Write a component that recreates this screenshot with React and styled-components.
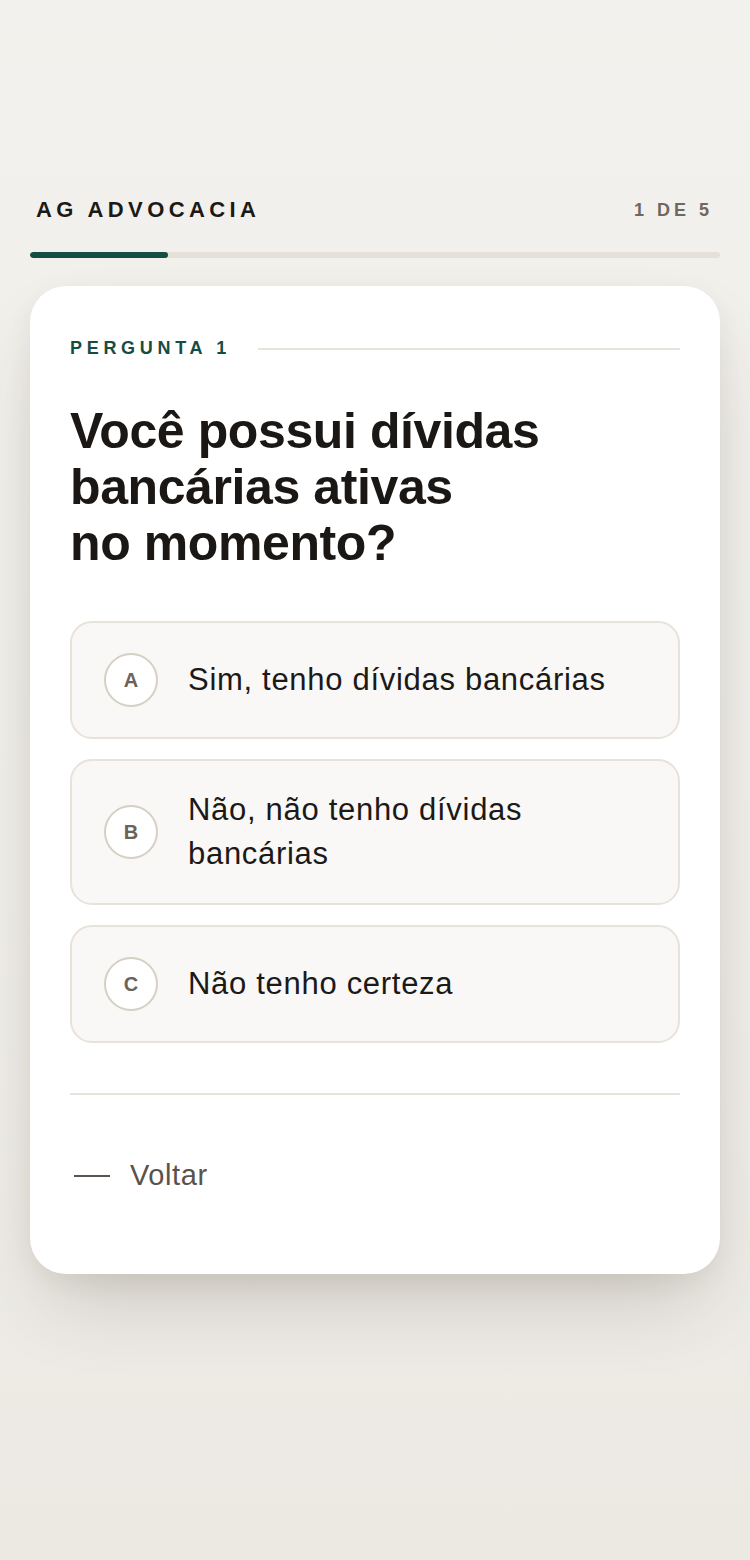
import React from "react";
import styled, { createGlobalStyle } from "styled-components";

const GlobalStyle = createGlobalStyle`
  html, body {
    margin: 0;
    padding: 0;
  }
  body {
    background: #f2f0ec;
    font-family: "Liberation Sans", Arial, sans-serif;
    -webkit-font-smoothing: antialiased;
  }
`;

const options = [
  { letter: "A", text: "Sim, tenho dívidas bancárias" },
  { letter: "B", text: "Não, não tenho dívidas bancárias" },
  { letter: "C", text: "Não tenho certeza" },
];

const App = () => {
  const step = 1;
  const total = 5;

  return (
    <>
      <GlobalStyle />
      <Page>
        <TopBar>
          <Brand>AG ADVOCACIA</Brand>
          <StepCount>
            {step} DE {total}
          </StepCount>
        </TopBar>
        <Track>
          <Fill style={{ width: `${(step / total) * 100}%` }} />
        </Track>

        <Card>
          <LabelRow>
            <Label>PERGUNTA {step}</Label>
            <LabelLine />
          </LabelRow>

          <Question>
            Você possui dívidas
            <br />
            bancárias ativas
            <br />
            no momento?
          </Question>

          <OptionList>
            {options.map((item) => (
              <Option key={item.letter}>
                <Letter>{item.letter}</Letter>
                <OptionText>{item.text}</OptionText>
              </Option>
            ))}
          </OptionList>

          <Divider />

          <BackButton>
            <BackDash />
            Voltar
          </BackButton>
        </Card>
      </Page>
    </>
  );
};

const Page = styled.div`
  min-height: 1560px;
  box-sizing: border-box;
  padding: 194px 30px 0;
  background: linear-gradient(180deg, #f2f1ed 0%, #f0eee9 60%, #ece9e3 100%);
`;

const TopBar = styled.div`
  display: flex;
  justify-content: space-between;
  align-items: center;
  padding: 0 7px 0 6px;
  height: 32px;
`;

const Brand = styled.div`
  font-size: 22px;
  font-weight: 700;
  letter-spacing: 4.4px;
  color: #1c1916;
`;

const StepCount = styled.div`
  font-size: 18px;
  font-weight: 700;
  letter-spacing: 4px;
  color: #6f6760;
`;

const Track = styled.div`
  margin-top: 26px;
  height: 6px;
  border-radius: 3px;
  background: #e5e1d9;
  overflow: hidden;
`;

const Fill = styled.div`
  height: 100%;
  border-radius: 3px;
  background: #164d43;
`;

const Card = styled.div`
  margin-top: 28px;
  background: #ffffff;
  border-radius: 36px;
  padding: 52px 40px 82px;
  box-shadow: 0 40px 80px -20px rgba(60, 52, 40, 0.22),
    0 8px 24px rgba(60, 52, 40, 0.06);
`;

const LabelRow = styled.div`
  display: flex;
  align-items: center;
  gap: 27px;
`;

const Label = styled.div`
  font-size: 18px;
  font-weight: 700;
  letter-spacing: 4.7px;
  color: #164d43;
  white-space: nowrap;
`;

const LabelLine = styled.div`
  flex: 1;
  height: 2px;
  background: #e8e4dc;
`;

const Question = styled.h1`
  margin: 44px 0 0;
  font-size: 50px;
  line-height: 56px;
  font-weight: 700;
  letter-spacing: -0.4px;
  color: #1a1714;
`;

const OptionList = styled.div`
  margin-top: 50px;
  display: flex;
  flex-direction: column;
  gap: 20px;
`;

const Option = styled.div`
  display: flex;
  align-items: center;
  gap: 30px;
  min-height: 118px;
  box-sizing: border-box;
  padding: 27px 32px;
  border: 2px solid #e8e3da;
  border-radius: 22px;
  background: #f9f8f6;
`;

const Letter = styled.div`
  flex: none;
  width: 54px;
  height: 54px;
  box-sizing: border-box;
  border-radius: 50%;
  border: 2px solid #d6cfc4;
  background: #ffffff;
  display: flex;
  align-items: center;
  justify-content: center;
  font-size: 20px;
  font-weight: 700;
  color: #6b625a;
`;

const OptionText = styled.div`
  font-size: 31px;
  line-height: 44px;
  letter-spacing: 0.7px;
  color: #1c1916;
  padding-right: 40px;
`;

const Divider = styled.div`
  margin-top: 50px;
  height: 2px;
  background: #e8e4dc;
`;

const BackButton = styled.div`
  margin-top: 64px;
  display: flex;
  align-items: center;
  gap: 20px;
  padding-left: 4px;
  font-size: 29px;
  letter-spacing: 0.6px;
  color: #5a524c;
  cursor: pointer;
`;

const BackDash = styled.span`
  width: 36px;
  height: 2px;
  background: #5a524c;
`;

export default App;
